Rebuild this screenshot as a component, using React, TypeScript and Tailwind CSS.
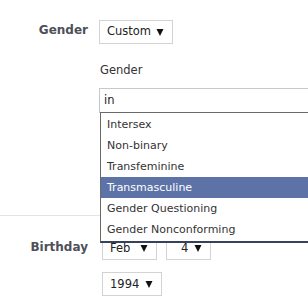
import { useState } from "react";

const FONT = { fontFamily: "'DejaVu Sans', Tahoma, sans-serif" };

function Arrow() {
  return (
    <svg width="8" height="8" viewBox="0 0 8 8" className="shrink-0">
      <path d="M0.5 1 L7.5 1 L4 8 Z" fill="#111" />
    </svg>
  );
}

function SelectBox({ value, width, pad = "pl-[7px]" }: { value: string; width: string; pad?: string }) {
  return (
    <div className={`flex h-[24px] items-center justify-between border border-[#d3d3d3] bg-white pr-[8px] ${pad} ${width}`}>
      <span className="text-[11.5px] text-[#222]">{value}</span>
      <Arrow />
    </div>
  );
}

const options = [
  "Intersex",
  "Non-binary",
  "Transfeminine",
  "Transmasculine",
  "Gender Questioning",
  "Gender Nonconforming",
];

export default function App() {
  const [active] = useState(3);

  return (
    <div className="relative h-[308px] w-[308px] overflow-hidden bg-white" style={FONT}>
      <div className="flex pt-[20px]">
        <div className="w-[88px] shrink-0 pt-[1px] text-right text-[12px] font-bold text-[#4e5058]">Gender</div>
        <div className="ml-[11px] flex flex-col">
          <SelectBox value="Custom" width="w-[74px]" />
          <div className="mt-[18px] pl-[1px] text-[11.5px] text-[#333]">Gender</div>
          <div className="relative mt-[9px] w-[230px]">
            <div className="flex h-[25px] items-center border border-[#c8c8c8] bg-white pl-[4px] text-[11.5px] text-[#222]">
              in
            </div>
            <div className="absolute left-[1px] top-[24px] z-10 w-[240px] border border-[#6a6a6a] border-b-[2px] border-b-[#37415c] bg-white py-[1px]">
              {options.map((o, i) => (
                <div
                  key={o}
                  className={`flex h-[21px] items-center pl-[6px] text-[11px] ${
                    i === active ? "bg-[#5d73a7] text-white" : "text-[#333]"
                  }`}
                >
                  {o}
                </div>
              ))}
            </div>
          </div>
        </div>
      </div>

      <div className="mt-[102px] h-px w-full bg-[#e3e3e3]" />

      <div className="flex pt-[20px]">
        <div className="w-[88px] shrink-0 pt-[2px] text-right text-[12px] font-bold text-[#4e5058]">Birthday</div>
        <div className="ml-[14px] flex flex-col gap-[12px]">
          <div className="flex gap-[9px]">
            <SelectBox value="Feb" width="w-[55px]" />
            <SelectBox value="4" width="w-[45px]" pad="pl-[14px]" />
          </div>
          <SelectBox value="1994" width="w-[60px]" />
        </div>
      </div>
    </div>
  );
}
